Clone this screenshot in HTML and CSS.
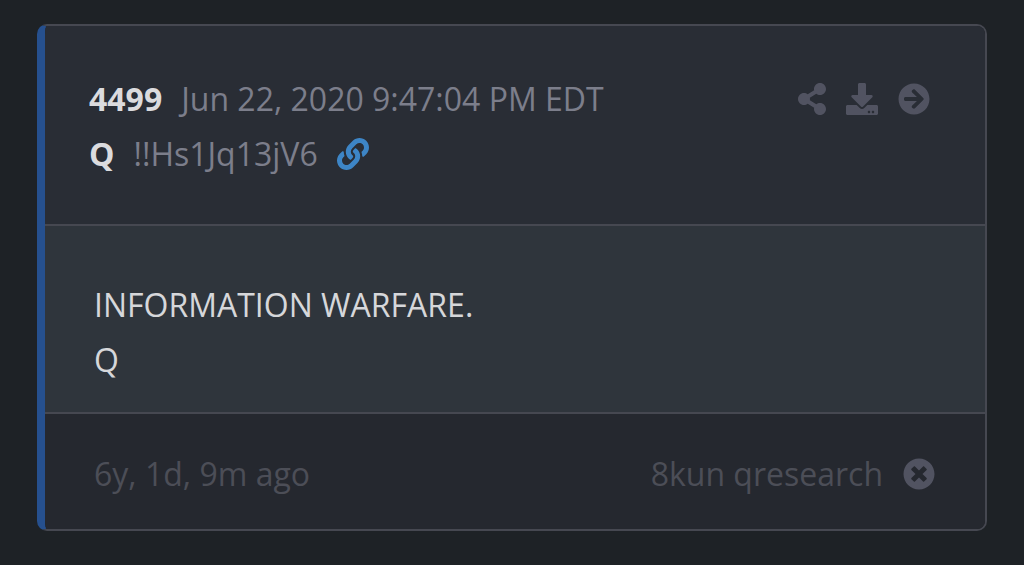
FILE: index.html
```
<!DOCTYPE html>
<html lang="en">
<head>
    <meta charset="UTF-8">
    <meta name="viewport" content="width=device-width, initial-scale=1.0">
    <title>4499</title>
    <link rel="stylesheet" href="styles.css">
</head>
<body>
    <article class="post">
        <!-- Post header -->
        <header class="post-header">
            <div class="post-meta">
                <div class="meta-row">
                    <strong>4499</strong>
                    <time datetime="2020-06-22T21:47:04-04:00">Jun 22, 2020 9:47:04 PM EDT</time>
                </div>
                <div class="meta-row">
                    <strong>Q</strong>
                    <span>!!Hs1Jq13jV6</span>
                    <a href="#" class="post-link" aria-label="Link to post">
                        <svg class="icon" viewBox="0 0 512 512"><path d="M326.612 185.391c59.747 59.809 58.927 155.698.36 214.59-.11.12-.24.25-.36.37l-67.2 67.2c-59.27 59.27-155.699 59.262-214.96 0-59.27-59.26-59.27-155.7 0-214.96l37.106-37.106c9.84-9.84 26.786-3.3 27.294 10.606.648 17.722 3.826 35.527 9.69 52.721 1.986 5.822.567 12.262-3.783 16.612l-13.087 13.087c-28.026 28.026-28.905 73.66-1.155 101.96 28.024 28.579 74.086 28.749 102.325.51l67.2-67.19c28.191-28.191 28.073-73.757 0-101.83-3.701-3.694-7.429-6.564-10.341-8.569a16.037 16.037 0 0 1-6.947-12.606c-.396-10.567 3.348-21.456 11.698-29.806l21.054-21.055c5.521-5.521 14.182-6.199 20.584-1.731a152.482 152.482 0 0 1 20.522 17.197zM467.547 44.449c-59.261-59.262-155.69-59.27-214.96 0l-67.2 67.2c-.12.12-.25.25-.36.37-58.566 58.892-59.387 154.781.36 214.59a152.454 152.454 0 0 0 20.521 17.196c6.402 4.468 15.064 3.789 20.584-1.731l21.054-21.055c8.35-8.35 12.094-19.239 11.698-29.806a16.037 16.037 0 0 0-6.947-12.606c-2.912-2.005-6.64-4.875-10.341-8.569-28.073-28.073-28.191-73.639 0-101.83l67.2-67.19c28.239-28.239 74.3-28.069 102.325.51 27.75 28.3 26.872 73.934-1.155 101.96l-13.087 13.087c-4.35 4.35-5.769 10.79-3.783 16.612 5.864 17.194 9.042 34.999 9.69 52.721.509 13.906 17.454 20.446 27.294 10.606l37.106-37.106c59.271-59.259 59.271-155.699.001-214.959z"/></svg>
                    </a>
                </div>
            </div>
            <div class="post-actions">
                <button type="button" aria-label="Share">
                    <svg class="icon icon-share" viewBox="0 0 448 512"><path d="M352 320c-22.608 0-43.387 7.819-59.79 20.895l-102.486-64.054a96.551 96.551 0 0 0 0-41.683l102.486-64.054C308.613 184.181 329.392 192 352 192c53.019 0 96-42.981 96-96S405.019 0 352 0s-96 42.981-96 96c0 7.158.79 14.13 2.276 20.841L155.79 180.895C139.387 167.819 118.608 160 96 160c-53.019 0-96 42.981-96 96s42.981 96 96 96c22.608 0 43.387-7.819 59.79-20.895l102.486 64.054A96.301 96.301 0 0 0 256 416c0 53.019 42.981 96 96 96s96-42.981 96-96-42.981-96-96-96z"/></svg>
                </button>
                <button type="button" aria-label="Download">
                    <svg class="icon" viewBox="0 0 512 512"><path d="M216 0h80c13.3 0 24 10.7 24 24v168h87.7c17.8 0 26.7 21.5 14.1 34.1L269.7 378.3c-7.5 7.5-19.8 7.5-27.3 0L90.1 226.1c-12.6-12.6-3.7-34.1 14.1-34.1H192V24c0-13.3 10.7-24 24-24zm296 376v112c0 13.3-10.7 24-24 24H24c-13.3 0-24-10.7-24-24V376c0-13.3 10.7-24 24-24h146.7l49 49c20.1 20.1 52.5 20.1 72.6 0l49-49H488c13.3 0 24 10.7 24 24zm-124 88c0-11-9-20-20-20s-20 9-20 20 9 20 20 20 20-9 20-20zm64 0c0-11-9-20-20-20s-20 9-20 20 9 20 20 20 20-9 20-20z"/></svg>
                </button>
                <a href="#" aria-label="Open post">
                    <svg class="icon" viewBox="0 0 512 512"><path d="M256 8c137 0 248 111 248 248S393 504 256 504 8 393 8 256 119 8 256 8zm-28.9 143.6l75.5 72.4H120c-13.3 0-24 10.7-24 24v16c0 13.3 10.7 24 24 24h182.6l-75.5 72.4c-9.7 9.3-9.9 24.8-.4 34.3l11 10.9c9.4 9.4 24.6 9.4 33.9 0L404.3 273c9.4-9.4 9.4-24.6 0-33.9L271.6 106.3c-9.4-9.4-24.6-9.4-33.9 0l-11 10.9c-9.5 9.6-9.3 25.1.4 34.4z"/></svg>
                </a>
            </div>
        </header>

        <!-- Post text -->
        <div class="post-body">
            <p>INFORMATION WARFARE.</p>
            <p>Q</p>
        </div>

        <!-- Post footer -->
        <footer class="post-footer">
            <span>6y, 1d, 9m ago</span>
            <div class="post-source">
                <span>8kun qresearch</span>
                <button type="button" aria-label="Close">
                    <svg class="icon" viewBox="0 0 512 512"><path d="M256 8C119 8 8 119 8 256s111 248 248 248 248-111 248-248S393 8 256 8zm121.6 313.1c4.7 4.7 4.7 12.3 0 17L338 377.6c-4.7 4.7-12.3 4.7-17 0L256 312l-65.1 65.6c-4.7 4.7-12.3 4.7-17 0L134.4 338c-4.7-4.7-4.7-12.3 0-17l65.6-65-65.6-65.1c-4.7-4.7-4.7-12.3 0-17l39.6-39.6c4.7-4.7 12.3-4.7 17 0l65 65.7 65.1-65.6c4.7-4.7 12.3-4.7 17 0l39.6 39.6c4.7 4.7 4.7 12.3 0 17L312 256l65.6 65.1z"/></svg>
                </button>
            </div>
        </footer>
    </article>
</body>
</html>
```
FILE: styles.css
```
* {
    box-sizing: border-box;
}

body {
    margin: 0;
    padding: 24px 37px 34px;
    background-color: #1e2226;
    font-family: "Open Sans", "Noto Sans", sans-serif;
    font-size: 32px;
    line-height: 55px;
}

.post {
    border: 2px solid #464851;
    border-left: 8px solid #26508e;
    border-radius: 10px;
    overflow: hidden;
}

.post-header {
    display: flex;
    justify-content: space-between;
    align-items: flex-start;
    padding: 45px 55px 43px 44px;
    background-color: #292d35;
    color: #7c7e8b;
    border-bottom: 2px solid #464851;
}

.meta-row {
    display: flex;
    align-items: center;
    gap: 19px;
}

.meta-row strong {
    color: #dbdbde;
}

.post-link {
    color: #3d85c6;
}

.post-actions {
    display: flex;
    gap: 20px;
}

.post-actions a,
.post-actions button,
.post-link,
.post-source button {
    display: flex;
    align-items: center;
    height: 55px;
}

.post-actions a,
.post-actions button,
.post-source button {
    padding: 0;
    border: none;
    background: none;
    color: #515361;
    cursor: pointer;
}

.icon {
    display: block;
    width: 32px;
    height: 32px;
    fill: currentColor;
}

.icon-share {
    width: 28px;
}

.post-body {
    padding: 51px 49px 25px;
    background-color: #2f353c;
    color: #d6d7da;
    border-bottom: 2px solid #464851;
}

.post-body p {
    margin: 0;
}

.post-footer {
    display: flex;
    justify-content: space-between;
    padding: 32px 50px 28px 49px;
    background-color: #25282f;
    color: #4c4e57;
}

.post-source {
    display: flex;
    gap: 20px;
}
```
